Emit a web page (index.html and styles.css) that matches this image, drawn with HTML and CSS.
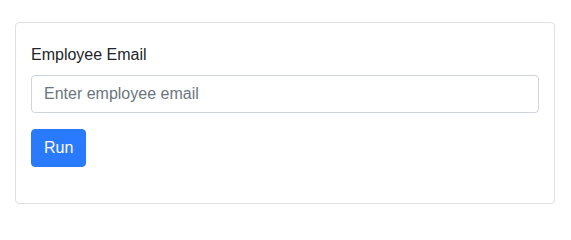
FILE: index.html
```html
<!DOCTYPE html>
<html lang="en">
<head>
<meta charset="utf-8">
<title>Employee Email</title>
<link rel="stylesheet" href="styles.css">
</head>
<body>
<div class="page">
  <div class="card">
    <form class="card-body">
      <div class="form-group">
        <label class="label" for="email">Employee Email</label>
        <input class="form-control" id="email" type="email" placeholder="Enter employee email">
      </div>
      <div class="form-group">
        <button class="btn" type="button">Run</button>
      </div>
    </form>
  </div>
</div>
</body>
</html>
```
FILE: styles.css
```css
* { box-sizing: border-box; }
html, body { margin: 0; padding: 0; background: #fff; }
body {
  font-family: "Liberation Sans", Arial, sans-serif;
  font-size: 16px;
  line-height: 24px;
  color: #212529;
}
.page {
  padding: 22px 16px 0 15px;
}
.card {
  border: 1px solid #dfdfdf;
  border-radius: 4px;
  background: #fff;
}
.card-body {
  margin: 0;
  padding: 20px 15px 20px 15px;
}
.form-group {
  margin-bottom: 16px;
}
.label {
  display: block;
  margin-bottom: 8px;
}
.form-control {
  display: block;
  width: 100%;
  height: 38px;
  padding: 6px 12px;
  font-family: inherit;
  font-size: 16px;
  line-height: 24px;
  color: #495057;
  background: #fff;
  border: 1px solid #ced4da;
  border-radius: 4px;
  outline: none;
}
.form-control::placeholder {
  color: #6c757d;
  opacity: 1;
}
.btn {
  display: inline-block;
  height: 38px;
  padding: 6px 12px;
  font-family: inherit;
  font-size: 16px;
  line-height: 24px;
  color: #fff;
  background: #2a7aff;
  border: 1px solid #2a7aff;
  border-radius: 4px;
  cursor: pointer;
}
```
